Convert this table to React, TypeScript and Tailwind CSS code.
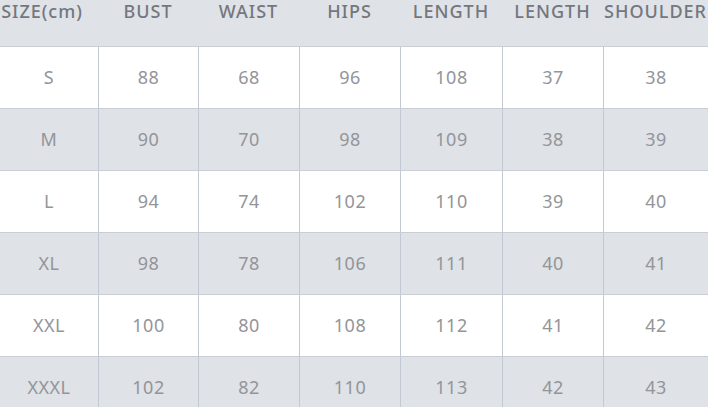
const headers = ["SIZE(cm)", "BUST", "WAIST", "HIPS", "LENGTH", "LENGTH", "SHOULDER"]

const rows = [
  ["S", "88", "68", "96", "108", "37", "38"],
  ["M", "90", "70", "98", "109", "38", "39"],
  ["L", "94", "74", "102", "110", "39", "40"],
  ["XL", "98", "78", "106", "111", "40", "41"],
  ["XXL", "100", "80", "108", "112", "41", "42"],
  ["XXXL", "102", "82", "110", "113", "42", "43"],
]

const cols = "grid grid-cols-[98px_100px_101px_101px_102px_101px_1fr]"

export default function App() {
  return (
    <div
      className="w-[708px] h-[407px] overflow-hidden bg-white"
      style={{ fontFamily: '"Noto Sans", "Open Sans", sans-serif' }}
    >
      {/* header */}
      <div className={`${cols} h-[47px] bg-[#dfe2e7] border-b border-[#c9ced6]`}>
        {headers.map((h, i) => (
          <div
            key={i}
            className={`flex justify-center text-[18px] leading-[22px] font-medium tracking-[1px] text-[#73777e] whitespace-nowrap ${i === 0 ? "pr-[14px]" : ""}`}
          >
            {h}
          </div>
        ))}
      </div>

      {/* body */}
      {rows.map((r, ri) => (
        <div
          key={ri}
          className={`${cols} h-[62px] border-b border-[#c9ced6] ${ri % 2 === 1 ? "bg-[#dfe2e7]" : "bg-white"}`}
        >
          {r.map((c, ci) => (
            <div
              key={ci}
              className={`flex items-center justify-center text-[18px] font-normal tracking-[0.5px] text-[#939599] ${ci > 0 ? "border-l border-[#c3c9d3]" : ""}`}
            >
              {c}
            </div>
          ))}
        </div>
      ))}
    </div>
  )
}
